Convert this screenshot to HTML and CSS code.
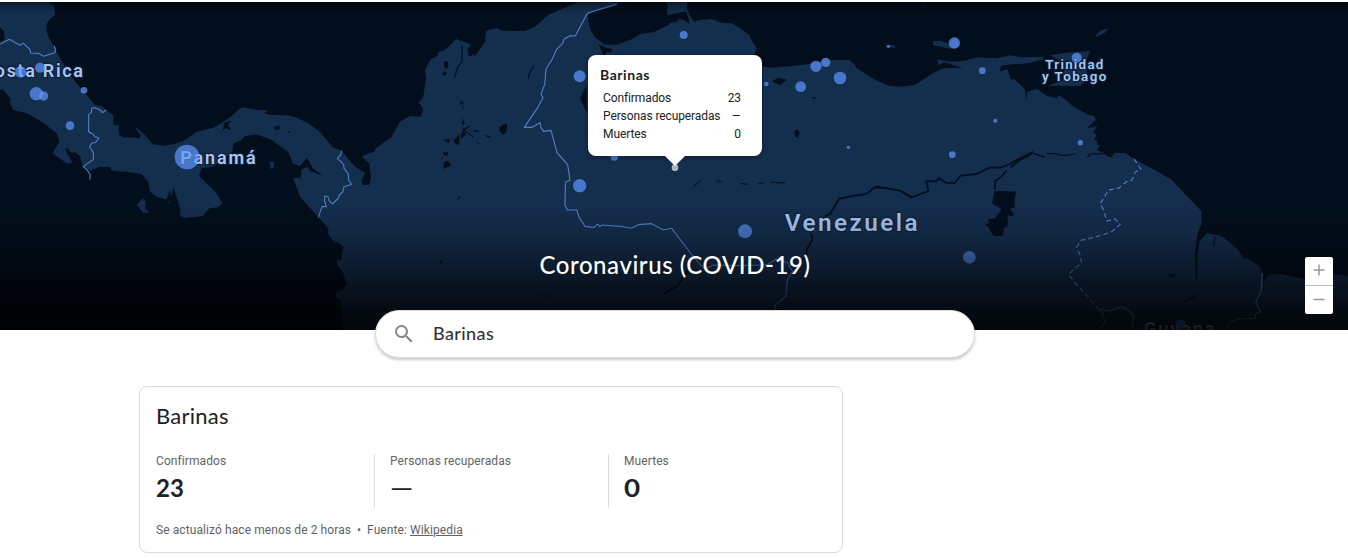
FILE: index.html
```html
<!DOCTYPE html>
<html lang="es">
<head>
<meta charset="utf-8">
<title>Coronavirus (COVID-19)</title>
<link rel="stylesheet" href="styles.css">
</head>
<body>
<header class="hero">
  <svg class="map" viewBox="0 6 4044 984" preserveAspectRatio="none">
    <defs>
      <linearGradient id="fade" x1="0" y1="0" x2="0" y2="1">
        <stop offset="0" stop-color="#000" stop-opacity="0"/>
        <stop offset=".22" stop-color="#000" stop-opacity=".13"/>
        <stop offset=".45" stop-color="#000" stop-opacity=".36"/>
        <stop offset=".65" stop-color="#000" stop-opacity=".58"/>
        <stop offset=".85" stop-color="#000" stop-opacity=".77"/>
        <stop offset="1" stop-color="#000" stop-opacity=".87"/>
      </linearGradient>
      <linearGradient id="topfade" x1="0" y1="0" x2="0" y2="1">
        <stop offset="0" stop-color="#000" stop-opacity=".4"/>
        <stop offset="1" stop-color="#000" stop-opacity="0"/>
      </linearGradient>
    </defs>
    <rect class="sea" y="6" width="4044" height="984"/>
    <!-- mainland -->
    <path class="land" d="M0 6H150L152 14 162 14 165 46 150 56 140 72 139 90 146 112 165 145 180 175 190 192 218 235 245 268 265 292 285 315 305 318 322 332 345 350 341 372 352 378 360 364 358 350 356 385 358 405 370 412 420 414 422 406 405 385 408 382 435 405 458 433 490 437 520 433 550 423 590 396 640 383 683 357 725 322 770 329 805 331 792 340 815 345 862 346 890 353 925 369 960 397 1000 443 1025 452 1038 468 1065 500 1095 518 1085 543 1088 555 1107 555 1113 535 1108 490 1090 475 1086 467 1122 455 1130 443 1175 410 1186 390 1200 365 1230 348 1262 350 1270 325 1256 308 1270 290 1278 235 1275 210 1292 178 1312 168 1315 157 1335 150 1368 117 1405 130 1413 135 1403 145 1405 165 1412 170 1417 162 1425 168 1455 125 1458 92 1490 83 1505 92 1575 93 1605 80 1645 45 1700 20 1725 10 1735 6H1858L1848 18 1770 38 1764 45 1765 65 1772 90 1785 112 1814 134 1850 134 1890 120 1925 101 1960 97 2005 76 2008 69 2032 65 2035 58 2055 60 2066 71 2068 60 2058 34 2002 45 2002 15 1997 6H2062L2062 30 2070 48 2082 66 2100 60 2135 57 2165 68 2195 70 2220 85 2248 105 2255 122 2270 145 2262 165 2290 200 2315 203 2380 198 2440 190 2480 180 2548 180 2565 195 2570 205 2630 242 2670 258 2700 260 2745 255 2795 222 2828 205 2888 203 2835 187 2815 195 2813 178 2855 185 2890 183 2930 172 2990 175 3030 166 3070 172 3130 170 3132 178 3085 190 3040 193 3005 196 2998 215 3022 207 3032 238 3043 238 3075 268 3078 302 3082 275 3110 266 3140 287 3170 295 3175 286 3190 293 3220 320 3265 345 3283 348 3287 360 3260 385 3292 378 3280 395 3290 405 3282 418 3293 425 3290 434 3300 436 3290 450 3310 458 3320 468 3335 472 3343 458 3375 459 3410 480 3425 490 3465 510 3515 540 3604 633 3605 670 3592 705 3585 760 3588 840 3592 835 3592 770 3598 725 3620 700 3665 708 3710 745 3733 777 3740 773 3780 800 3787 820 3789 850 3805 825 3840 822 3915 837 4000 822 4044 828V990H1030L1023 900 1003 890 1012 875 1028 870 1040 850 1030 820 1012 795 1012 778 1022 785 1030 742 1012 725 1003 728 983 700 986 685 955 652 900 590 880 535 903 532 905 508 880 492 865 457 815 420 770 403 735 408 722 422 700 430 697 455 640 500 605 505 597 528 650 580 667 610 655 622 628 625 608 648 555 654 540 648 542 630 520 560 515 590 510 570 500 598 470 590 450 575 445 545 425 522 380 515 350 514 335 512 330 502 300 500 270 512 248 500 240 468 225 457 212 458 205 445 195 447 210 475 217 490 200 490 158 460 178 425 170 400 125 365 80 340 40 330 30 310 32 297 10 270 0 267V125L14 120 12 95 0 82Z"/>
    <!-- islands -->
    <path class="land" d="M428 594L437 605 435 625 448 637 430 638 410 616ZM808 485L824 487 822 503 812 507ZM512 605L503 614 510 600ZM2798 123L2825 122 2850 134 2870 112 2880 140 2850 146 2800 136ZM2660 137L2680 135 2687 143 2664 142ZM3286 107L3302 92 3326 84 3315 98 3290 110ZM3150 166L3200 158 3270 153 3258 184 3262 238 3240 258 3145 257 3188 241 3196 188 3172 178ZM2763 9L2770 9 2773 17ZM1010 780L1020 790 1020 804 1012 798ZM1008 878L1020 876 1020 893 1003 892Z"/>
    <!-- lakes and rivers -->
    <path class="water" d="M340 350L358 348 360 370 350 378 340 372ZM370 374L381 376 378 385ZM390 376L407 386 402 390ZM659 402L670 388 671 368 693 362 684 375 695 391 676 385ZM820 384L836 376 842 387 828 391ZM862 394L872 394 868 399ZM878 490L900 498 920 474 939 505 968 527 930 512 923 500 903 509ZM1740 295L1760 255V335L1752 320ZM1796 132L1818 143 1838 147 1832 158 1818 155V165H1810ZM2318 242L2335 233 2360 239 2342 255 2324 250ZM2383 393L2393 388 2399 399 2393 413 2385 409ZM2434 293L2449 290 2442 297ZM2984 572L3050 575 3044 595 3045 622 3029 626 3041 640 3038 650 3024 645 3022 680 3012 683 3008 708 2981 708 2966 683 2954 672 2968 671 2964 657 2984 656 3005 628 2976 610ZM3499 820L3517 825 3533 820 3516 832Z"/>
    <path class="water" d="M1333 183L1342 184 1346 196 1340 208 1332 200ZM1332 214L1340 216 1337 226 1328 225ZM1378 307L1385 302 1392 312 1385 314ZM1386 318L1392 320 1390 328ZM1387 352L1394 372 1387 375ZM1382 405L1390 390 1398 403 1392 408 1382 418ZM1362 420L1378 402 1378 425 1375 436 1362 428ZM1331 420L1351 417 1346 430ZM1326 458L1346 456 1342 468 1332 465ZM1323 470L1328 470 1326 480ZM1332 487L1344 482 1355 496 1330 507ZM1420 390L1437 393 1430 398ZM1453 406L1473 408 1467 413ZM1426 425L1441 431 1434 431ZM1498 383L1508 374 1522 372 1519 398 1508 405 1499 394ZM1376 588L1381 591 1371 603ZM1321 778L1328 787 1320 792ZM1628 882L1638 886 1633 890Z"/>
    <path class="river" d="M2580 586L2602 580 2625 561 2648 563 2700 572 2735 592 2785 573 2779 544 2810 543 2817 534 2838 548 2864 549 2882 527 2930 522 2970 502 3000 503 3023 495 3060 475 3100 456"/>
    <path class="river" d="M3020 512L3004 530 2986 542 2984 568M2580 585L2557 588 2525 595 2518 595 2492 640 2473 651M2434 700L2437 720 2420 748 2420 765 2395 795M2063 812L2030 860 1990 881"/>
    <path class="stream" d="M1386 138V185L1374 200 1364 232M1604 195L1590 215 1584 235M1386 385L1420 412M1388 390L1410 378M2080 560L2102 542M2150 543L2165 545M2223 550L2242 553M2275 552L2290 548M2310 546L2355 549M3100 460L3135 472M3140 460L3165 461 3190 467 3226 462M3262 473L3270 462 3310 461M3612 683L3600 707M3645 709L3640 738M3584 880L3582 893 3550 905"/>
    <path class="water" d="M2622 562L2632 556 2644 560 2670 563 2630 566ZM3030 500L3062 473 3094 460 3104 447 3092 467 3060 482 3035 503Z"/>
    <!-- borders -->
    <path class="border" d="M0 133L28 118 60 136 70 130 90 148 92 159 115 160 131 169 165 158 167 148 162 137M318 330L308 338 300 330 285 323 275 325 274 337 266 343V395L278 402 285 410 297 414 287 427 275 430 269 440 280 458 280 478 250 500 263 512 271 525 269 539M1025 452L1022 465 1012 475 1031 493 1032 505 1044 520 1047 543 1055 553 1032 560 1028 576 1018 585 1013 597 997 612 987 601 984 590 974 588 974 604 979 620 966 620 955 652"/>
    <path class="border" d="M1850 12L1762 40 1726 108 1710 107 1692 118 1688 130 1670 148 1657 177 1638 207 1634 254 1623 282 1629 293 1611 326 1573 382 1596 382 1620 368 1623 383 1631 394 1653 391 1671 458 1703 494 1710 541 1698 545 1696 555 1695 615 1702 630 1731 630 1736 650 1755 679 1783 682 1792 672 1800 680 1807 675 1870 680 1894 685 1915 674 1955 671 1990 690 2015 685 2080 770 2113 807 2140 795 2220 797 2300 795 2330 777 2363 788 2378 815 2362 838 2358 888 2325 916 2327 932"/>
    <path class="border dashed" d="M3402 477L3412 491 3423 507 3405 517 3396 540 3378 546 3357 564 3325 570 3314 590 3301 610 3313 635 3320 664 3344 656 3361 673 3338 693 3308 705 3282 712 3243 721 3230 742 3240 765 3245 790 3220 807 3206 825 3298 930"/>
    <path class="border" d="M3298 930L3310 926 3317 934 3334 931 3364 920 3388 933 3402 947 3394 990M3304 930L3316 968 3300 985M3787 820L3784 872 3767 905 3782 935 3768 940 3765 955 3716 957 3690 966 3682 980 3690 990"/>
    <g class="labels">
      <text x="-56" y="232" font-size="54" textLength="305">Costa Rica</text>
      <text x="541" y="492" font-size="54" textLength="226">Panamá</text>
      <text x="3136" y="206" font-size="40" textLength="174">Trinidad</text>
      <text x="3126" y="242" font-size="40" textLength="193">y Tobago</text>
      <text x="2354" y="692" font-size="73" textLength="399">Venezuela</text>
      <text x="3432" y="1005" font-size="54" textLength="212">Guyana</text>
    </g>
    <g class="cases">
      <circle cx="62" cy="216" r="17"/><circle cx="120" cy="203" r="15"/><circle cx="109" cy="281" r="20"/><circle cx="131" cy="288" r="14"/><circle cx="252" cy="271" r="10"/><circle cx="210" cy="377" r="13"/><circle cx="561" cy="471" r="37"/>
      <circle cx="1739" cy="229" r="18"/><circle cx="1739" cy="557" r="20"/><circle cx="1843" cy="471" r="11"/><circle cx="2051" cy="105" r="12"/><circle cx="2299" cy="252" r="7"/><circle cx="2402" cy="260" r="16"/><circle cx="2448" cy="199" r="17"/><circle cx="2477" cy="187" r="14"/><circle cx="2520" cy="234" r="19"/><circle cx="2545" cy="442" r="5"/><circle cx="2665" cy="139" r="5"/><circle cx="2235" cy="694" r="21"/>
      <circle cx="2863" cy="129" r="17"/><circle cx="2947" cy="212" r="10"/><circle cx="2986" cy="362" r="6"/><circle cx="2857" cy="464" r="10"/><circle cx="3241" cy="428" r="8"/><circle cx="3230" cy="173" r="15"/><circle cx="2908" cy="772" r="19"/><circle cx="3542" cy="975" r="16"/>
      <circle class="selected" cx="2025" cy="503" r="10"/>
    </g>
    <rect y="606" width="4044" height="384" fill="url(#fade)"/>
    <rect y="6" width="4044" height="32" fill="url(#topfade)"/>
  </svg>
  <h1 class="title">Coronavirus (COVID-19)</h1>
  <section class="tooltip">
    <h2 class="tip-title">Barinas</h2>
    <div class="tip-row"><span>Confirmados</span><span>23</span></div>
    <div class="tip-row"><span>Personas recuperadas</span><span class="tip-dash">–</span></div>
    <div class="tip-row"><span>Muertes</span><span>0</span></div>
  </section>
  <div class="zoom-control">
    <button class="zoom-btn" aria-label="Acercar"><svg width="12" height="12" viewBox="0 0 12 12"><path d="M6 .5v11M.5 6h11"/></svg></button>
    <button class="zoom-btn" aria-label="Alejar"><svg width="12" height="12" viewBox="0 0 12 12"><path d="M.5 5.500h11"/></svg></button>
  </div>
</header>
<div class="search">
  <svg class="search-icon" width="24" height="24" viewBox="0 0 24 24"><path d="M15.500 14h-.79l-.28-.27A6.470 6.470 0 0 0 16 9.500 6.500 6.500 0 1 0 9.500 16c1.610 0 3.090-.59 4.230-1.570l.27.28v.79l5 4.990L20.490 19l-4.990-5zm-6 0a4.500 4.500 0 1 1 0-9 4.500 4.500 0 0 1 0 9z"/></svg>
  <span class="search-text">Barinas</span>
</div>
<main class="card">
  <h2 class="card-title">Barinas</h2>
  <div class="stats">
    <div class="stat"><div class="stat-label">Confirmados</div><div class="stat-value">23</div></div>
    <div class="stat"><div class="stat-label">Personas recuperadas</div><div class="stat-value dash">—</div></div>
    <div class="stat"><div class="stat-label">Muertes</div><div class="stat-value zero">0</div></div>
  </div>
  <footer class="source"><span>Se actualizó hace menos de 2 horas</span><span class="dot">•</span><span>Fuente: <a class="link" href="#">Wikipedia</a></span></footer>
</main>
</body>
</html>
```
FILE: styles.css
```css
* { box-sizing: border-box; }
body { margin: 0; height: 558px; overflow: hidden; background: #fff; color: #202124; font-family: Roboto, "Liberation Sans", sans-serif; }
h1, h2 { margin: 0; font-weight: 400; }
.hero { position: relative; height: 330px; padding-top: 2px; }
.map { display: block; width: 100%; height: 328px; }
.sea, .water { fill: #020e1c; }
.land { fill: #142e4e; }
.river, .stream { fill: none; stroke: #020e1c; stroke-width: 5.5; stroke-linejoin: round; }
.stream { stroke-width: 3.5; }
.border { fill: none; stroke: #527fc8; stroke-width: 3.3; stroke-linejoin: round; }
.dashed { stroke-dasharray: 15 9; }
.cases { fill: #5f98ff; fill-opacity: .7; }
.selected { fill: #c4cedb; fill-opacity: .85; }
.labels { fill: #aac6f5; font-weight: 600; stroke: #0c2038; stroke-width: 7; stroke-linejoin: round; paint-order: stroke; }
.title { position: absolute; top: 250px; left: 0; width: 100%; color: #fff; font: 500 24px/30px Lato, sans-serif; text-align: center; letter-spacing: .57px; white-space: nowrap; padding-left: 2px; }
.tooltip { position: absolute; left: 588px; top: 55px; width: 174px; height: 101px; padding: 11px 21px 0 15px; border-radius: 8px; background: #fff; box-shadow: 0 1px 5px rgba(0,0,0,.4); font-size: 12px; }
.tooltip::after { content: ""; position: absolute; left: 76px; top: 100px; border: 11px solid transparent; border-top-color: #fff; border-bottom: 0; }
.tip-title { margin: 0 0 5px -3px; font: 700 14px/18px Lato, sans-serif; letter-spacing: .55px; }
.tip-row { display: flex; justify-content: space-between; line-height: 18px; letter-spacing: -.1px; white-space: nowrap; }
.tip-dash { transform: scaleX(1.2); transform-origin: right; }
.zoom-control { position: absolute; left: 1305px; top: 257px; width: 28px; height: 57px; border-radius: 3px; background: #fff; overflow: hidden; }
.zoom-btn { display: flex; align-items: center; justify-content: center; width: 28px; height: 28px; padding: 0 0 2px; border: 0; background: #fff; }
.zoom-btn + .zoom-btn { height: 29px; border-top: 1px solid #bbb; padding: 0 0 1px; }
.zoom-btn path { fill: none; stroke: #999; stroke-width: 1.5; }
.search { position: relative; display: flex; align-items: center; width: 600px; height: 48px; margin: -20px 0 0 375px; padding: 0 0 0 16px; border: 1px solid #dadce0; border-radius: 24px; background: #fff; box-shadow: 0 2px 3px rgba(0,0,0,.22); }
.search-icon { fill: #80868b; }
.search-text { margin: -2px 0 0 17px; font: 500 18px/24px Lato, sans-serif; letter-spacing: .4px; color: #333; }
.card { width: 704px; height: 167px; margin: 28px 0 0 139px; padding: 15px 0 0 16px; border: 1px solid #dadce0; border-radius: 8px; }
.card-title { font: 400 22px/28px Lato, sans-serif; letter-spacing: .25px; }
.stats { display: flex; height: 54px; margin-top: 24px; }
.stat { width: 234px; padding-left: 15px; border-left: 1px solid #dadce0; }
.stat:first-child { width: 218px; padding-left: 0; border-left: 0; }
.stat-label { color: #5f6368; font-size: 12px; line-height: 14px; letter-spacing: .08px; }
.stat-value { margin-top: 5px; font: 700 24px/30px Lato, sans-serif; }
.dash { transform: scaleX(1.22); transform-origin: left; font-weight: 500; }
.zero { transform: scaleX(1.16); transform-origin: left; }
.source { display: flex; margin-top: 14px; color: #5f6368; font-size: 12px; line-height: 16px; letter-spacing: .09px; white-space: nowrap; }
.dot { width: 16px; text-align: center; }
.link { color: inherit; text-decoration: underline; }
```
